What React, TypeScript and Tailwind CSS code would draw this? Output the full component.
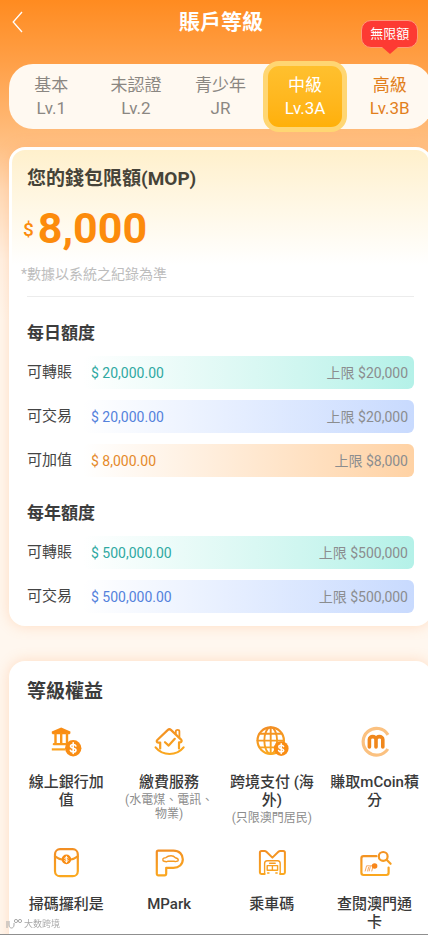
import { useState } from 'react';
import type { ReactNode } from 'react';
import clsx from 'clsx';

/* ─── Data ─── */

interface Level {
  id: string;
  name: string;
  code: string;
  badge?: string;
}

const LEVELS: Level[] = [
  { id: 'lv1', name: '基本', code: 'Lv.1' },
  { id: 'lv2', name: '未認證', code: 'Lv.2' },
  { id: 'jr', name: '青少年', code: 'JR' },
  { id: 'lv3a', name: '中級', code: 'Lv.3A' },
  { id: 'lv3b', name: '高級', code: 'Lv.3B', badge: '無限額' },
];

type Tone = 'teal' | 'blue' | 'orange';

interface Quota {
  label: string;
  value: string;
  limit: string;
  tone: Tone;
}

const DAILY: Quota[] = [
  { label: '可轉賬', value: '$ 20,000.00', limit: '上限 $20,000', tone: 'teal' },
  { label: '可交易', value: '$ 20,000.00', limit: '上限 $20,000', tone: 'blue' },
  { label: '可加值', value: '$ 8,000.00', limit: '上限 $8,000', tone: 'orange' },
];

const YEARLY: Quota[] = [
  { label: '可轉賬', value: '$ 500,000.00', limit: '上限 $500,000', tone: 'teal' },
  { label: '可交易', value: '$ 500,000.00', limit: '上限 $500,000', tone: 'blue' },
];

const BAR_TONE: Record<Tone, string> = {
  teal: 'to-[#b4f1e8] text-[#2fa9a2]',
  blue: 'to-[#c8dafe] text-[#5482dc]',
  orange: 'to-[#ffd2a4] text-[#e5892a]',
};

/* ─── Icons ─── */

const STROKE = 'url(#orange)';

function Icon({ children }: { children: ReactNode }) {
  return (
    <svg
      className="size-8 overflow-visible"
      viewBox="0 0 32 32"
      fill="none"
      stroke={STROKE}
      strokeWidth="2.2"
      strokeLinecap="round"
      strokeLinejoin="round"
      aria-hidden="true"
    >
      {children}
    </svg>
  );
}

function Coin({ cx, cy, r }: { cx: number; cy: number; r: number }) {
  return (
    <g transform={`translate(${cx} ${cy}) scale(${r / 8})`}>
      <circle r="8" fill="#f98d14" stroke="none" />
      <path
        d="M2.6 -2.2C2.2 -3.3 1.2 -3.6 0 -3.6C-1.5 -3.6 -2.6 -2.9 -2.6 -1.8C-2.6 0.5 2.7 -0.5 2.7 1.9C2.7 3 1.5 3.6 0 3.6C-1.4 3.6 -2.5 3.1 -2.8 2M0 -5.2V5.2"
        stroke="#fff"
        strokeWidth="1.6"
      />
    </g>
  );
}

function BankIcon() {
  return (
    <Icon>
      <path d="M1.8 8.6V6.6L11.2 2.6L20.4 6.6V8.6Z" fill="#f98d14" stroke="none" />
      <path d="M2.8 8.6H19.4" strokeWidth="1.4" stroke="#f98d14" />
      <path d="M5.5 9V18M11.2 9V18M17 9V18" strokeWidth="2.4" stroke="#fa9518" />
      <path d="M3.8 19.2H18" strokeWidth="2.2" stroke="#fa9a1c" />
      <path d="M1.8 24.4H15" strokeWidth="2.2" stroke="#fba322" strokeLinecap="butt" />
      <Coin cx={23.2} cy={23.2} r={8.2} />
    </Icon>
  );
}

function HouseIcon() {
  return (
    <Icon>
      <path d="M7.2 23.4V17.6H5.2C3.6 17.6 3.3 16 4.3 15L14.9 4.9C15.8 4.1 17 4.1 17.9 4.9L28.1 14.6C29.2 15.8 28.6 17.4 27.2 17.4H26V23.4" />
      <path d="M22.8 8.6V6.4C22.8 4.4 26.4 4.4 26.4 6.4V12" strokeWidth="1.8" />
      <path d="M12 17.2L15.7 20.6L21.8 13.8" />
      <path d="M2.6 22.4C6.2 26.8 11 29 16.6 29C22.2 29 27 26.8 30.6 22.4" />
    </Icon>
  );
}

function GlobeIcon() {
  return (
    <Icon>
      <circle cx="14.7" cy="15.6" r="13.2" />
      <ellipse cx="14.7" cy="15.6" rx="6.4" ry="13.2" strokeWidth="1.9" />
      <path d="M14.7 2.4V28.8M1.5 15.6H27.9M3.6 8.8H25.8M3.6 22.4H20" strokeWidth="1.9" />
      <Coin cx={25.2} cy={23.6} r={7.4} />
    </Icon>
  );
}

function MCoinIcon() {
  return (
    <Icon>
      <path
        d="M29 9.8A13.4 13.4 0 1 0 28.8 24"
        stroke="#fbc180"
        strokeWidth="3.2"
        strokeLinecap="butt"
      />
      <path
        d="M10.4 22V14.6C10.4 10.6 17 10.6 17 14.6V22M17 14.6C17 10.6 23.8 10.6 23.8 14.6V22"
        stroke="#f0871c"
        strokeWidth="3.6"
      />
    </Icon>
  );
}

function RedPacketIcon() {
  return (
    <Icon>
      <rect x="5" y="2.2" width="22.8" height="27" rx="5" />
      <path d="M5 9.4C7.5 11.2 9.5 12.2 12 12.5M27.8 9.4C25.3 11.2 23.2 12.2 20.8 12.5" />
      <Coin cx={16.4} cy={12.4} r={4.8} />
    </Icon>
  );
}

function ParkIcon() {
  return (
    <Icon>
      <path d="M5.2 3.6H20.4C26.4 3.6 29.8 7.4 29.8 12.2C29.8 17.4 26 20.8 20.4 20.8H13.2V26.6C13.2 27.8 12.6 28.4 11.6 28.4H5.4C4.4 28.4 3.8 27.8 3.8 26.8V5C3.8 4.1 4.3 3.6 5.2 3.6Z" />
      <path
        d="M11 14.2C9.6 14.2 9.4 11.6 10.8 11.2L13 10.6C14.6 9 16 8.8 18 8.8C20 8.8 21.2 9.4 22.4 10.8C24.4 11.2 25.4 11.8 25.2 13.2C25.2 13.9 24.8 14.2 24 14.2L22.6 14.6L21 14.2H15L13.4 14.8Z"
        strokeWidth="1.4"
      />
    </Icon>
  );
}

function BusIcon() {
  return (
    <Icon>
      <path
        d="M8.6 27H5.4C4.4 27 3.9 26.4 3.9 25.6V5.6C3.9 4.4 4.6 3.9 5.6 3.9H8.6C9.4 3.9 9.8 4.2 10.4 4.8L16.4 10.6L22.4 4.8C23 4.2 23.4 3.9 24.2 3.9H27.2C28.2 3.9 28.9 4.4 28.9 5.6V25.6C28.9 26.4 28.4 27 27.4 27H24.2"
        strokeWidth="2"
      />
      <path d="M8.6 27V16.6C8.6 14.4 9.8 13.8 11.2 13.8H21.6C23 13.8 24.2 14.4 24.2 16.6V27" strokeWidth="1.4" />
      <path d="M13.6 16.2H19.2M11.2 18.6H21.6V23.2H11.2ZM16.4 18.6V23.2M11.6 26H13M19.8 26H21.2" strokeWidth="1.4" />
    </Icon>
  );
}

function CardSearchIcon() {
  return (
    <Icon>
      <path d="M17.4 9.2H4.6C3 9.2 2.4 10 2.4 11.4V25.8C2.4 27.2 3 28 4.6 28H27.4C29 28 29.6 27.2 29.6 25.8V20.6" />
      <circle cx="24.2" cy="9.4" r="4.4" />
      <path d="M27.6 12.8L31.6 16.8" />
      <path
        d="M6.2 24L7.6 18.8H10.2C11.4 18.8 11.4 19.6 11.1 20.6L10.2 24M8.6 24L9.6 20.4M11.2 18.8H13C14 19 13.8 20 13.6 20.8L12.8 24"
        stroke="#f8a860"
        strokeWidth="1"
      />
      <circle cx="15.6" cy="19" r="2.8" fill="#f8861a" stroke="none" />
    </Icon>
  );
}

/* ─── Benefits ─── */

interface Benefit {
  title: string;
  note?: string;
  icon: ReactNode;
}

const BENEFITS: Benefit[] = [
  { title: '線上銀行加值', icon: <BankIcon /> },
  { title: '繳費服務', note: '(水電煤、電訊、物業)', icon: <HouseIcon /> },
  { title: '跨境支付 (海外)', note: '(只限澳門居民)', icon: <GlobeIcon /> },
  { title: '賺取mCoin積分', icon: <MCoinIcon /> },
  { title: '掃碼攞利是', icon: <RedPacketIcon /> },
  { title: 'MPark', icon: <ParkIcon /> },
  { title: '乘車碼', icon: <BusIcon /> },
  { title: '查閱澳門通卡', icon: <CardSearchIcon /> },
];

/* ─── Pieces ─── */

function LevelTab({ level, active, onSelect }: { level: Level; active: boolean; onSelect: () => void }) {
  return (
    <button
      type="button"
      aria-pressed={active}
      onClick={onSelect}
      className={clsx(
        'relative flex flex-col items-center justify-center text-[17px] leading-[23px]',
        active && '-my-[3px] rounded-2xl border-[5px] border-[#ffd673] bg-linear-to-b from-[#ffc02e] to-[#ffb008] text-white',
        !active && (level.badge ? 'text-[#e27f1c]' : 'text-[#8b8782]'),
      )}
    >
      <span>{level.name}</span>
      <span>{level.code}</span>
      {level.badge && (
        <span className="absolute -top-11 flex flex-col items-center">
          <span className="rounded-[10px] border border-[#ff9a78] bg-[#fd3a33] px-2 text-[13px] leading-[26px] text-white">
            {level.badge}
          </span>
          <svg className="-mt-px h-[7px] w-4" viewBox="0 0 16 7" aria-hidden="true">
            <path d="M0 0H16L8 7Z" fill="#fd3a33" />
          </svg>
        </span>
      )}
    </button>
  );
}

function QuotaList({ title, items }: { title: string; items: Quota[] }) {
  return (
    <section className="mt-6">
      <h3 className="text-[17px] leading-6 font-bold text-[#3c3c3c]">{title}</h3>
      <ul className="mt-[11px] flex flex-col gap-[11px]">
        {items.map((q) => (
          <li key={q.label} className="flex h-[33px] items-center">
            <span className="w-14 shrink-0 text-[15px] text-[#444]">{q.label}</span>
            <div
              className={clsx(
                'flex h-full flex-1 items-center justify-between rounded-md bg-linear-to-r from-white pr-1.5 pl-2 text-sm',
                BAR_TONE[q.tone],
              )}
            >
              <span>{q.value}</span>
              <span className="text-[#8b8d8f]">{q.limit}</span>
            </div>
          </li>
        ))}
      </ul>
    </section>
  );
}

/* ─── Page ─── */

export default function App() {
  const [selected, setSelected] = useState('lv3a');

  return (
    <div className="min-h-screen overflow-hidden bg-[#fff7ef] bg-[linear-gradient(to_bottom,#ff8b20_0,#ffa048_64px,#ffc083_145px,#ffd9b6_190px,#fff1e4_260px,#fff7ef_320px)] font-[Roboto,'Noto_Sans_CJK_TC',sans-serif]">
      <svg className="absolute size-0" aria-hidden="true">
        <defs>
          <linearGradient id="orange" gradientUnits="userSpaceOnUse" x1="0" y1="0" x2="6" y2="32">
            <stop offset="0" stopColor="#f08a24" />
            <stop offset="1" stopColor="#fba91f" />
          </linearGradient>
        </defs>
      </svg>

      <header className="grid h-11 grid-cols-[40px_1fr_26px] items-center">
        <button type="button" aria-label="返回" className="flex h-full items-center pl-3">
          <svg className="h-[22px] w-3" viewBox="0 0 12 22" fill="none" stroke="#fff" strokeWidth="1.3" aria-hidden="true">
            <path d="M10 1L1.2 11L10 21" />
          </svg>
        </button>
        <h1 className="text-center text-[21px] leading-7 font-bold text-white">賬戶等級</h1>
      </header>

      <nav className="mt-5 -mr-1 ml-[9px] grid h-[65px] grid-cols-5 rounded-3xl bg-[#fff9f1]">
        {LEVELS.map((level) => (
          <LevelTab
            key={level.id}
            level={level}
            active={level.id === selected}
            onSelect={() => setSelected(level.id)}
          />
        ))}
      </nav>

      <main className="-mr-1 ml-[9px]">
        <section className="mt-[18px] rounded-2xl border-[3px] border-white bg-white bg-linear-to-b from-[#fff0cc] to-white to-[115px] px-[15px] pt-[15px] pb-2.5 shadow-[0_0_14px_rgba(255,160,90,0.3)]">
          <h2 className="text-[19px] leading-7 font-bold text-[#464338]">您的錢包限額(MOP)</h2>
          <p className="-ml-1 mt-[13px] flex items-end gap-1 font-bold text-[#fc8b0c]">
            <span className="text-[19px] leading-10 font-medium">$</span>
            <span className="text-[43px] leading-[44px]">8,000</span>
          </p>
          <p className="mt-3.5 -ml-1.5 text-sm text-[#bdbdbd]">*數據以系統之紀錄為準</p>
          <hr className="mt-3 border-[#ececec]" />
          <QuotaList title="每日額度" items={DAILY} />
          <QuotaList title="每年額度" items={YEARLY} />
        </section>

        <section className="mt-[35px] rounded-2xl bg-white pt-[17px] pb-6 shadow-[0_0_14px_rgba(255,160,90,0.3)]">
          <h2 className="px-[18px] text-[19px] leading-7 font-bold text-[#3c3c3c]">等級權益</h2>
          <ul className="mt-[19px] grid grid-cols-4 gap-y-[22px] px-1.5">
            {BENEFITS.map((b) => (
              <li key={b.title} className="flex flex-col items-center px-[7px] text-center">
                {b.icon}
                <span className="mt-4 text-[15px] leading-[18px] font-medium text-[#3a3a3a]">{b.title}</span>
                {b.note && <span className="mt-0.5 text-xs leading-[14px] text-[#8c8c8c]">{b.note}</span>}
              </li>
            ))}
          </ul>
        </section>
      </main>

      {/* Source mark and the home bar sit over the scrolled page */}
      <div className="pointer-events-none fixed inset-x-0 bottom-0">
        <div className="flex items-center gap-0.5 px-1.5 pb-1 text-[#a8a8a8]">
          <svg className="h-3 w-4" viewBox="0 0 16 12" fill="none" stroke="currentColor" aria-hidden="true">
            <path d="M1 3V10M3 3V7C3 11 8 11 8 7V5" />
            <circle cx="10" cy="3" r="1.6" />
            <circle cx="14" cy="3" r="1.6" />
          </svg>
          <span className="text-[9px] leading-3">大数跨境</span>
        </div>
        <div className="h-px bg-[#8f8f8f]" />
      </div>
    </div>
  );
}
